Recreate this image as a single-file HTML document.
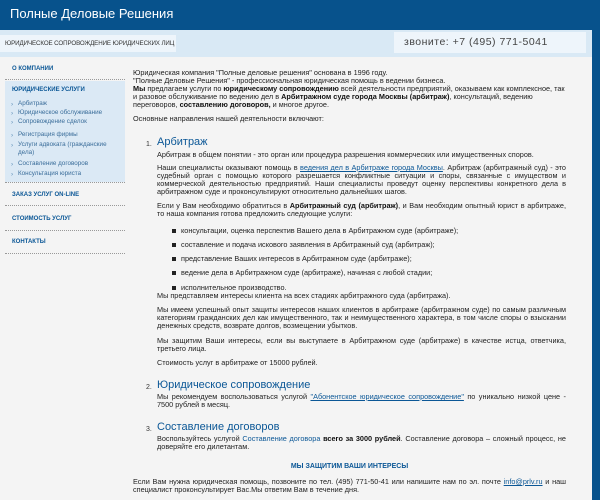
<!DOCTYPE html>
<html><head><meta charset="utf-8"><style>
*{margin:0;padding:0;box-sizing:border-box}
body{width:600px;height:500px;overflow:hidden;background:#07528c;font-family:"Liberation Sans","DejaVu Sans",sans-serif;color:#222;font-size:7px;position:relative}
.a{position:absolute}
#band{left:0;top:30px;width:592px;height:27px;background:#d9e9f5}
#main{left:0;top:57px;width:592px;height:443px;background:#f4f4f4}
.p{position:absolute;left:133px;width:433px;line-height:8px;text-align:justify;font-size:7.3px}
.h{position:absolute;font-size:11px;color:#0b5796;line-height:12px}
.n{position:absolute;font-size:7px;color:#333}
a{color:#0b5796;text-decoration:underline}
.bl{position:absolute;left:181px;font-size:7.3px;line-height:8px}
.bl:before{content:"";position:absolute;left:-9px;top:2px;width:4px;height:4px;background:#222}
.s{position:absolute;left:12px;font-size:6px;font-weight:bold;color:#0b5796}
.si{position:absolute;left:12px;font-size:6.3px;color:#3a6d9a;line-height:8px;width:112px}
.si:before{content:"›";position:absolute;left:-1px;top:1px;color:#5a8ab5}
.si span{padding-left:6px;display:block}
.d{position:absolute;left:5px;width:120px;border-top:1px dotted #999}
b{font-weight:bold;color:#111}
</style></head><body>
<div class="a" style="left:10px;top:6px;color:#fff;font-size:13px">Полные Деловые Решения</div>
<div class="a" id="band"></div>
<div class="a" style="left:0;top:35px;width:176px;height:17px;background:#eef5fb"></div>
<div class="a" style="left:5px;top:40px;font-size:6.2px;color:#333;letter-spacing:-0.1px">ЮРИДИЧЕСКОЕ СОПРОВОЖДЕНИЕ ЮРИДИЧЕСКИХ ЛИЦ</div>
<div class="a" style="left:394px;top:32px;width:192px;height:21px;background:#eef5fb"></div>
<div class="a" style="left:404px;top:36px;font-size:10.5px;color:#444;letter-spacing:0.5px">звоните: +7 (495) 771-5041</div>
<div class="a" id="main"></div>
<div class="a" style="left:5px;top:81px;width:120px;height:101px;background:#dbe9f5"></div>
<div class="s" style="top:66px">О КОМПАНИИ</div>
<div class="d" style="top:79px"></div>
<div class="s" style="top:87px">ЮРИДИЧЕСКИЕ УСЛУГИ</div>
<div class="si" style="top:100px"><span>Арбитраж</span></div>
<div class="si" style="top:109px"><span>Юридическое обслуживание</span></div>
<div class="si" style="top:118px"><span>Сопровождение сделок</span></div>
<div class="si" style="top:131px"><span>Регистрация фирмы</span></div>
<div class="si" style="top:141px;width:108px"><span>Услуги адвоката (гражданские дела)</span></div>
<div class="si" style="top:160px"><span>Составление договоров</span></div>
<div class="si" style="top:170px"><span>Консультация юриста</span></div>
<div class="d" style="top:182px"></div>
<div class="s" style="top:192px">ЗАКАЗ УСЛУГ ON-LINE</div>
<div class="d" style="top:205px"></div>
<div class="s" style="top:216px">СТОИМОСТЬ УСЛУГ</div>
<div class="d" style="top:230px"></div>
<div class="s" style="top:239px">КОНТАКТЫ</div>
<div class="d" style="top:253px"></div>

<div class="p" style="top:69px;text-align:left">Юридическая компания "Полные деловые решения" основана в 1996 году.<br>"Полные Деловые Решения" - профессиональная юридическая помощь в ведении бизнеса.<br><b>Мы</b> предлагаем услуги по <b>юридическому сопровождению</b> всей деятельности предприятий, оказываем как комплексное, так и разовое обслуживание по ведению дел в <b>Арбитражном суде города Москвы (арбитраж)</b>, консультаций, ведению переговоров, <b>составлению договоров,</b> и многое другое.</div>
<div class="p" style="top:115px">Основные направления нашей деятельности включают:</div>
<div class="n" style="left:146px;top:141px">1.</div>
<div class="h" style="left:157px;top:136px">Арбитраж</div>
<div class="p" style="left:157px;width:409px;top:151px">Арбитраж в общем понятии - это орган или процедура разрешения коммерческих или имущественных споров.</div>
<div class="p" style="left:157px;width:409px;top:164px">Наши специалисты оказывают помощь в <a>ведения дел в Арбитраже города Москвы</a>. Арбитраж (арбитражный суд) - это судебный орган с помощью которого разрешается конфликтные ситуации и споры, связанные с имуществом и коммерческой деятельностью предприятий. Наши специалисты проведут оценку перспективы конкретного дела в арбитражном суде и проконсультируют относительно дальнейших шагов.</div>
<div class="p" style="left:157px;width:409px;top:202px">Если у Вам необходимо обратиться в <b>Арбитражный суд (арбитраж)</b>, и Вам необходим опытный юрист в арбитраже, то наша компания готова предложить следующие услуги:</div>
<div class="bl" style="top:227px">консультации, оценка перспектив Вашего дела в Арбитражном суде (арбитраже);</div>
<div class="bl" style="top:241px">составление и подача искового заявления в Арбитражный суд (арбитраж);</div>
<div class="bl" style="top:255px">представление Ваших интересов в Арбитражном суде (арбитраже);</div>
<div class="bl" style="top:269px">ведение дела в Арбитражном суде (арбитраже), начиная с любой стадии;</div>
<div class="bl" style="top:284px">исполнительное производство.</div>
<div class="p" style="left:157px;width:409px;top:292px">Мы представляем интересы клиента на всех стадиях арбитражного суда (арбитража).</div>
<div class="p" style="left:157px;width:409px;top:306px">Мы имеем успешный опыт защиты интересов наших клиентов в арбитраже (арбитражном суде) по самым различным категориям гражданских дел как имущественного, так и неимущественного характера, в том числе споры о взыскании денежных средств, возврате долгов, возмещении убытков.</div>
<div class="p" style="left:157px;width:409px;top:337px">Мы защитим Ваши интересы, если вы выступаете в Арбитражном суде (арбитраже) в качестве истца, ответчика, третьего лица.</div>
<div class="p" style="left:157px;width:409px;top:359px">Стоимость услуг в арбитраже от 15000 рублей.</div>
<div class="n" style="left:146px;top:384px">2.</div>
<div class="h" style="left:157px;top:379px">Юридическое сопровождение</div>
<div class="p" style="left:157px;width:409px;top:393px">Мы рекомендуем воспользоваться услугой <a>"Абонентское юридическое сопровождение"</a> по уникально низкой цене - 7500 рублей в месяц.</div>
<div class="n" style="left:146px;top:426px">3.</div>
<div class="h" style="left:157px;top:421px">Составление договоров</div>
<div class="p" style="left:157px;width:409px;top:435px">Воспользуйтесь услугой <a style="text-decoration:none">Составление договора</a> <b>всего за 3000 рублей</b>. Составление договора – сложный процесс, не доверяйте его дилетантам.</div>
<div class="a" style="left:133px;width:433px;top:463px;text-align:center;font-size:7px;font-weight:bold;color:#0b5796">МЫ ЗАЩИТИМ ВАШИ ИНТЕРЕСЫ</div>
<div class="p" style="top:478px">Если Вам нужна юридическая помощь, позвоните по тел. (495) 771-50-41 или напишите нам по эл. почте <a>info@prlv.ru</a> и наш специалист проконсультирует Вас.Мы ответим Вам в течение дня.</div>
</body></html>
